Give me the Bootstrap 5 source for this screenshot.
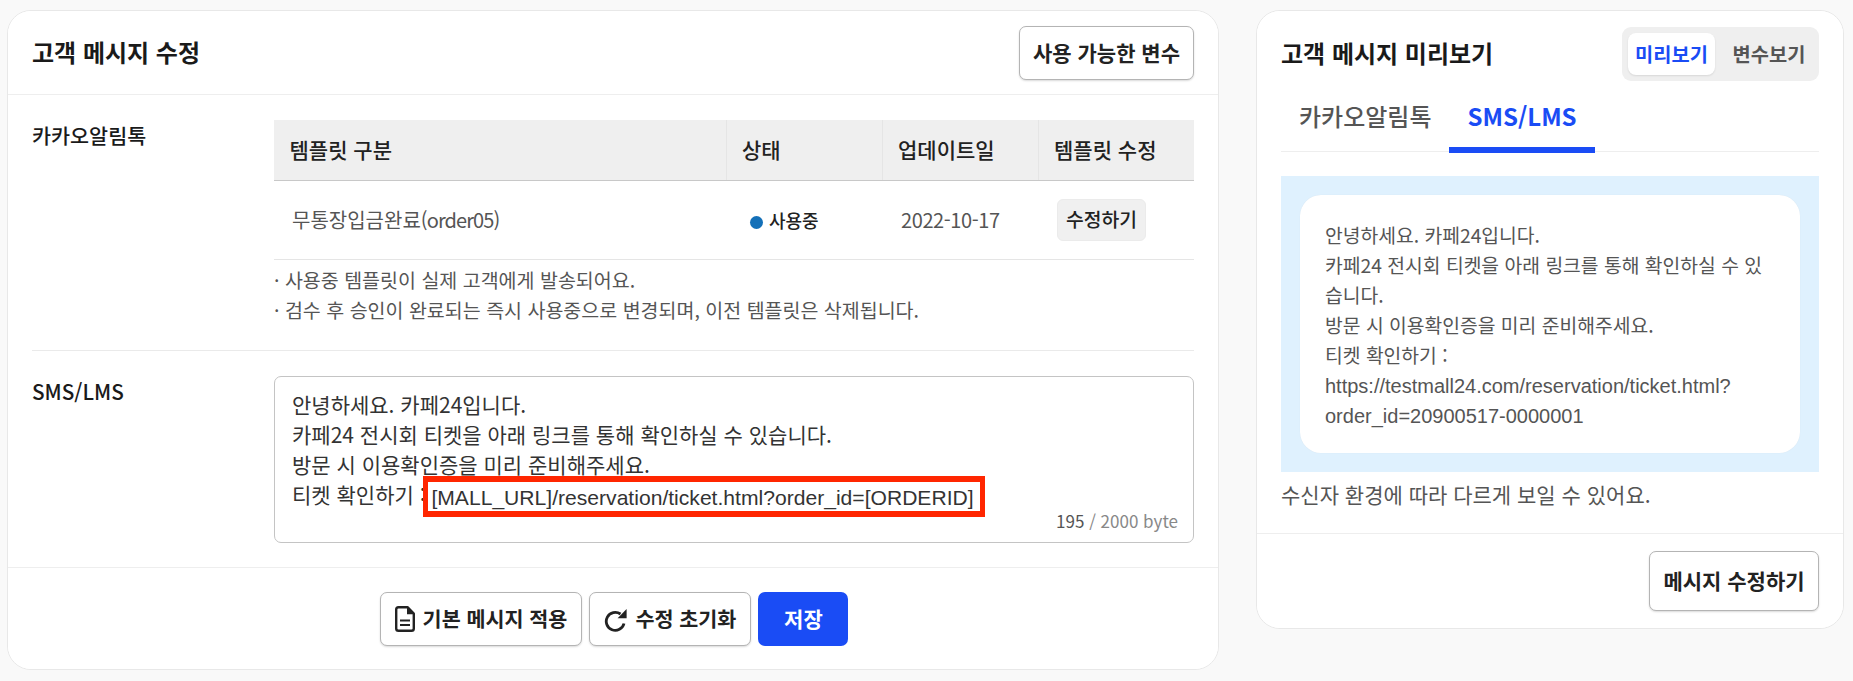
<!DOCTYPE html>
<html lang="ko"><head><meta charset="utf-8"><title>고객 메시지 수정</title>
<link href="https://cdn.jsdelivr.net/npm/bootstrap@5.3.0/dist/css/bootstrap.min.css" rel="stylesheet">
<style>
html,body{height:681px;overflow:hidden}
body{background:#f9f9f9;font-family:"Noto Sans CJK KR","Noto Sans",sans-serif;font-size:20px;color:#444;padding:10px 2px 0 7px}
.page-flex{gap:37px;align-items:flex-start}
.edit-card{width:1212px;height:660px;border-radius:24px;border-color:#e8e8e8;overflow:hidden;flex:none}
.view-card{width:588px;height:619px;border-radius:24px;border-color:#e8e8e8;overflow:hidden;flex:none}
.edit-card .card-header,.view-card .card-header{background:#fff;border:0;padding:0}
.edit-head{height:85px;padding:0 24px!important;border-bottom:1px solid #eee!important;border-radius:0!important}
.head-title{font-size:24px;font-weight:700;color:#1a1a1a;margin:0}
.plain-btn{background:#fff;border:1px solid #b4b4b4;border-radius:7px;box-shadow:0 1px 2px rgba(0,0,0,.15);font-size:21px;font-weight:700;color:#222;height:54px;padding:0 13px;white-space:nowrap}
.form-sec{display:flex;padding:25px 24px 0}
.sec-label{width:242px;flex:none;font-size:20.7px;font-weight:500;color:#1a1a1a;line-height:30px}
.sec-main{width:920px;flex:none}
.tpl-table{table-layout:fixed;width:920px;margin:0;font-size:20px}
.tpl-table th{background:#efefef;height:60px;font-size:21px;font-weight:500;color:#222;padding:0 15.5px;vertical-align:middle;border-bottom:1px solid #c8c8c8;border-right:1px solid #e5e5e5}
.tpl-table th:last-child{border-right:0}
.tpl-table td{height:79px;vertical-align:middle;padding:0 0 0 18px;color:#555;border-bottom:1px solid #e5e5e5}
.tpl-table td.cell-state{padding-left:24px}
.tpl-table td.cell-date{padding-left:19px;letter-spacing:-.4px}
.tpl-table td.cell-act{padding-left:19px}
.latin-tight{letter-spacing:-.9px}
.state-dot{display:inline-block;width:13px;height:13px;border-radius:50%;background:#1470b8;margin-right:6px;vertical-align:-1px}
.state-txt{color:#222;font-weight:500;font-size:18px}
.mini-btn{background:#f0f0f0;border:1px solid #ebebeb;border-radius:6px;font-size:19.3px;font-weight:500;color:#222;height:42px;width:89px;padding:0;white-space:nowrap}
.note-list{list-style:none;margin:5px 0 0;padding:0;font-size:19.5px;line-height:30px;color:#555}
.sec-rule{height:1px;background:#eaeaea;margin:25px 24px 0}
.msg-box{position:relative;height:167px;padding:12px 17px;border:1px solid #c4c4c4;border-radius:7px;font-size:21px;line-height:30px;color:#333;white-space:nowrap}
.ascii-text{font-family:"Liberation Sans",Arial,sans-serif;line-height:1}
.msg-box .ascii-text{font-size:21.1px;position:relative;top:2px}
.red-mark{position:absolute;left:148px;top:99px;width:562px;height:41px;border:solid #ff2600;border-width:6px 5px;pointer-events:none}
.byte-count{position:absolute;right:15px;bottom:8px;font-size:17px;line-height:26px;color:#888}
.byte-count b{font-weight:400;color:#555}
.edit-foot{display:flex;justify-content:center;gap:7px;height:103px;margin-top:24px;padding:24px 0 0 2px;border-top:1px solid #eee;background:#fff}
.edit-foot .plain-btn{font-size:20.7px;padding:0 14px}
.save-btn{background:#1a4cf5;border:0;border-radius:7px;color:#fff;font-size:21px;font-weight:700;height:54px;width:90px}
.foot-ico{vertical-align:-5px;margin-right:8px}
.view-head{height:70px;padding:16px 24px 0!important}
.seg-wrap{background:#efefef;border-radius:9px;width:197px;height:54px;padding:6px 0 6px 6px;border:0}
.seg-wrap>.seg-on,.seg-wrap>.seg-off{border:0;font-size:19.8px;font-weight:700;height:42px;border-radius:8px!important;white-space:nowrap}
.seg-wrap>.seg-on{background:#fff;color:#1a4cf5;box-shadow:0 1px 2px rgba(0,0,0,.1);flex:0 0 87px;padding:0}
.seg-wrap>.seg-off{background:transparent;color:#555;flex:1 1 0;padding:0 0 0 5px}
.tab-line{margin:0 24px;border-bottom:1px solid #eee!important;height:71px;padding-top:0;flex-wrap:nowrap}
.tab-line .nav-link{border:0;background:transparent;font-size:24px;font-weight:500;color:#555;padding:0 18px;height:72px;line-height:70px;border-radius:0}
.tab-line .nav-link.active{color:#1a4cf5;font-weight:700;border-bottom:6px solid #1a4cf5;background:transparent;line-height:70px;padding:0 18px}
.sky-box{background:#dff1fe;margin:24px 24px 0;padding:19px;height:296px}
.bubble{background:#fff;border-radius:21px;height:258px;padding:25px;font-size:19.3px;line-height:30px;color:#555;box-shadow:0 0 1px rgba(0,0,0,.08);word-break:break-all}
.bubble .ascii-text{font-size:20px}
.view-note{margin:7px 24px 0;font-size:21px;line-height:30px;color:#555}
.view-foot{background:#fff;border-top:1px solid #eee;margin-top:24px;height:96px;padding:17px 24px 0;display:flex;justify-content:flex-end}
.view-foot .plain-btn{height:60px;width:170px;padding:0}
</style></head>
<body>
<div class="d-flex page-flex">
 <div class="card edit-card">
  <div class="card-header edit-head d-flex align-items-center justify-content-between">
   <h5 class="head-title">고객 메시지 수정</h5>
   <button class="btn plain-btn" type="button">사용 가능한 변수</button>
  </div>
  <div class="form-sec">
   <div class="sec-label">카카오알림톡</div>
   <div class="sec-main">
    <table class="table tpl-table">
     <colgroup><col style="width:452px"><col style="width:156px"><col style="width:156px"><col style="width:156px"></colgroup>
     <thead><tr><th>템플릿 구분</th><th>상태</th><th>업데이트일</th><th>템플릿 수정</th></tr></thead>
     <tbody><tr><td>무통장입금완료<span class="latin-tight">(order05)</span></td><td class="cell-state text-nowrap"><span class="state-dot"></span><span class="state-txt">사용중</span></td><td class="cell-date text-nowrap">2022-10-17</td><td class="cell-act"><button class="btn mini-btn" type="button">수정하기</button></td></tr></tbody>
    </table>
    <ul class="note-list">
     <li>· 사용중 템플릿이 실제 고객에게 발송되어요.</li>
     <li>· 검수 후 승인이 완료되는 즉시 사용중으로 변경되며, 이전 템플릿은 삭제됩니다.</li>
    </ul>
   </div>
  </div>
  <div class="sec-rule"></div>
  <div class="form-sec">
   <div class="sec-label">SMS/LMS</div>
   <div class="sec-main">
    <div class="msg-box">안녕하세요. 카페24입니다.<br>카페24 전시회 티켓을 아래 링크를 통해 확인하실 수 있습니다.<br>방문 시 이용확인증을 미리 준비해주세요.<br>티켓 확인하기 : <span class="ascii-text">[MALL_URL]/reservation/ticket.html?order_id=[ORDERID]</span>
     <div class="red-mark"></div>
     <div class="byte-count"><b>195</b> / 2000 byte</div>
    </div>
   </div>
  </div>
  <div class="edit-foot">
   <button class="btn plain-btn" type="button"><svg class="foot-ico" width="20" height="26" viewBox="0 0 20 26"><path d="M1.2 3.5a2.3 2.3 0 0 1 2.3-2.3H12.5L18.8 7.5V22.5a2.3 2.3 0 0 1-2.3 2.3H3.5a2.3 2.3 0 0 1-2.3-2.3z" fill="none" stroke="#222" stroke-width="2.4" stroke-linejoin="round"/><path d="M12 1.2L19 8.2H12z" fill="#222"/><path d="M5 14.5h10M5 19h10" stroke="#222" stroke-width="2"/></svg>기본 메시지 적용</button>
   <button class="btn plain-btn" type="button"><svg class="foot-ico" width="23" height="23" viewBox="0 0 23 23"><path d="M20 14.5A9 9 0 1 1 16.5 5" fill="none" stroke="#222" stroke-width="2.8"/><path d="M22.6 0V9.2H13.6z" fill="#222"/></svg>수정 초기화</button>
   <button class="btn save-btn" type="button">저장</button>
  </div>
 </div>
 <div class="card view-card">
  <div class="card-header view-head d-flex justify-content-between align-items-start">
   <h5 class="head-title mt-2 pt-1">고객 메시지 미리보기</h5>
   <div class="btn-group seg-wrap" role="group"><button class="btn seg-on" type="button">미리보기</button><button class="btn seg-off" type="button">변수보기</button></div>
  </div>
  <ul class="nav nav-tabs tab-line">
   <li class="nav-item"><a class="nav-link" href="#">카카오알림톡</a></li>
   <li class="nav-item"><a class="nav-link active" href="#">SMS/LMS</a></li>
  </ul>
  <div class="sky-box"><div class="bubble">안녕하세요. 카페24입니다.<br>카페24 전시회 티켓을 아래 링크를 통해 확인하실 수 있습니다.<br>방문 시 이용확인증을 미리 준비해주세요.<br>티켓 확인하기 :<br><span class="ascii-text">https://testmall24.com/reservation/ticket.html?<br>order_id=20900517-0000001</span></div></div>
  <div class="view-note">수신자 환경에 따라 다르게 보일 수 있어요.</div>
  <div class="view-foot"><button class="btn plain-btn" type="button">메시지 수정하기</button></div>
 </div>
</div>
<script src="https://cdn.jsdelivr.net/npm/bootstrap@5.3.0/dist/js/bootstrap.bundle.min.js"></script>
</body></html>
